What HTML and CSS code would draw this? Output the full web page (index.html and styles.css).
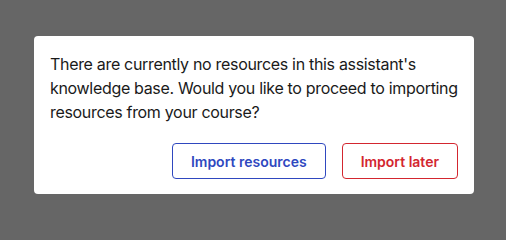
FILE: index.html
```html
<!DOCTYPE html>
<html lang="en">
<head>
<meta charset="utf-8">
<title>Dialog</title>
<link rel="stylesheet" href="styles.css">
</head>
<body>
<div class="overlay">
  <div class="dialog" role="dialog">
    <p class="message">There are currently no resources in this assistant's knowledge base. Would you like to proceed to importing resources from your course?</p>
    <div class="actions">
      <button class="btn btn-primary">Import resources</button>
      <button class="btn btn-danger">Import later</button>
    </div>
  </div>
</div>
</body>
</html>
```
FILE: styles.css
```css
html, body {
  margin: 0;
  padding: 0;
  height: 100%;
}
body {
  background: #666666;
  font-family: Inter, "Noto Sans", sans-serif;
}
.overlay {
  padding: 36px 0 0 34px;
}
.dialog {
  width: 440px;
  box-sizing: border-box;
  background: #ffffff;
  border-radius: 4px;
  padding: 16px 16px 15px 16px;
}
.message {
  margin: 0;
  font-size: 16px;
  line-height: 24px;
  letter-spacing: -0.32px;
  color: #1a1a1a;
}
.actions {
  display: flex;
  justify-content: flex-end;
  gap: 16px;
  margin-top: 19px;
}
.btn {
  font-family: Inter, "Noto Sans", sans-serif;
  font-size: 14px;
  font-weight: 600;
  height: 36px;
  padding: 0 18px;
  background: #ffffff;
  border-radius: 4px;
  border: 1px solid;
  cursor: pointer;
}
.btn-primary {
  color: #2f48bf;
  border-color: #2f48bf;
}
.btn-danger {
  color: #d3262f;
  border-color: #d3262f;
}
```
